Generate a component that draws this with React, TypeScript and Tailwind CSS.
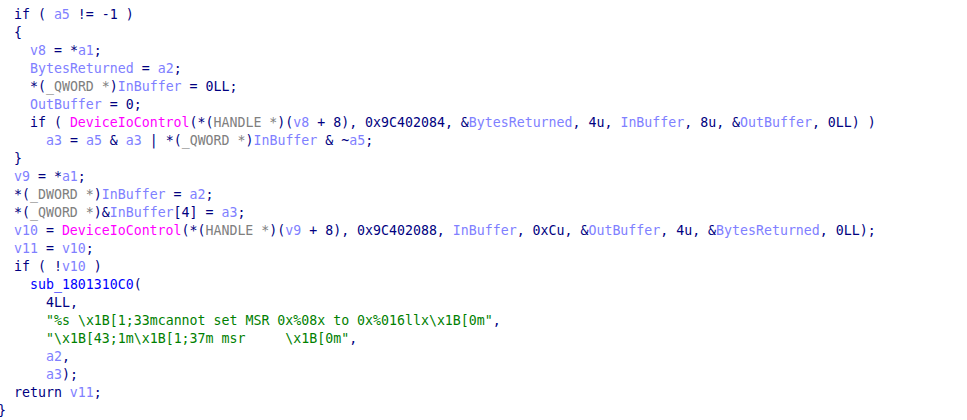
import React from "react";

// token kinds -> IDA pseudocode colours
const tone: Record<string, string> = {
  n: "text-[#000080]",
  v: "text-[#8080ff]",
  g: "text-[#808080]",
  f: "text-[#ff00ff]",
  b: "text-[#0000ff]",
  s: "text-[#008000]",
};

// indent level -> left offset (2 chars per level, column 0 sits just off-screen)
const indent = ["-ml-[2px]", "pl-[14px]", "pl-[30px]", "pl-[46px]"];

type Tok = [string, string];
type Line = [number, Tok[]];

const lines: Line[] = [
  [1, [["n", "if ( "], ["v", "a5"], ["n", " != -1 )"]]],
  [1, [["n", "{"]]],
  [2, [["v", "v8"], ["n", " = *"], ["v", "a1"], ["n", ";"]]],
  [2, [["v", "BytesReturned"], ["n", " = "], ["v", "a2"], ["n", ";"]]],
  [2, [["n", "*("], ["g", "_QWORD *"], ["n", ")"], ["v", "InBuffer"], ["n", " = 0LL;"]]],
  [2, [["v", "OutBuffer"], ["n", " = 0;"]]],
  [
    2,
    [
      ["n", "if ( "],
      ["f", "DeviceIoControl"],
      ["n", "(*("],
      ["g", "HANDLE *"],
      ["n", ")("],
      ["v", "v8"],
      ["n", " + 8), 0x9C402084, &"],
      ["v", "BytesReturned"],
      ["n", ", 4u, "],
      ["v", "InBuffer"],
      ["n", ", 8u, &"],
      ["v", "OutBuffer"],
      ["n", ", 0LL) )"],
    ],
  ],
  [
    3,
    [
      ["v", "a3"],
      ["n", " = "],
      ["v", "a5"],
      ["n", " & "],
      ["v", "a3"],
      ["n", " | *("],
      ["g", "_QWORD *"],
      ["n", ")"],
      ["v", "InBuffer"],
      ["n", " & ~"],
      ["v", "a5"],
      ["n", ";"],
    ],
  ],
  [1, [["n", "}"]]],
  [1, [["v", "v9"], ["n", " = *"], ["v", "a1"], ["n", ";"]]],
  [1, [["n", "*("], ["g", "_DWORD *"], ["n", ")"], ["v", "InBuffer"], ["n", " = "], ["v", "a2"], ["n", ";"]]],
  [1, [["n", "*("], ["g", "_QWORD *"], ["n", ")&"], ["v", "InBuffer"], ["n", "[4] = "], ["v", "a3"], ["n", ";"]]],
  [
    1,
    [
      ["v", "v10"],
      ["n", " = "],
      ["f", "DeviceIoControl"],
      ["n", "(*("],
      ["g", "HANDLE *"],
      ["n", ")("],
      ["v", "v9"],
      ["n", " + 8), 0x9C402088, "],
      ["v", "InBuffer"],
      ["n", ", 0xCu, &"],
      ["v", "OutBuffer"],
      ["n", ", 4u, &"],
      ["v", "BytesReturned"],
      ["n", ", 0LL);"],
    ],
  ],
  [1, [["v", "v11"], ["n", " = "], ["v", "v10"], ["n", ";"]]],
  [1, [["n", "if ( !"], ["v", "v10"], ["n", " )"]]],
  [2, [["b", "sub_1801310C0"], ["n", "("]]],
  [3, [["n", "4LL,"]]],
  [3, [["s", '"%s \\x1B[1;33mcannot set MSR 0x%08x to 0x%016llx\\x1B[0m"'], ["n", ","]]],
  [3, [["s", '"\\x1B[43;1m\\x1B[1;37m msr     \\x1B[0m"'], ["n", ","]]],
  [3, [["v", "a2"], ["n", ","]]],
  [3, [["v", "a3"], ["n", ");"]]],
  [1, [["n", "return "], ["v", "v11"], ["n", ";"]]],
  [0, [["n", "}"]]],
];

export default function App() {
  return (
    <div className="w-[967px] h-[420px] overflow-hidden bg-white">
      <div className="pt-[6px] font-['DejaVu_Sans_Mono',monospace] text-[13.25px] leading-[18px] whitespace-pre">
        {lines.map(([lvl, toks], i) => (
          <div key={i} className={`h-[18px] ${indent[lvl]}`}>
            {toks.map(([k, t], j) => (
              <span key={j} className={tone[k]}>
                {t}
              </span>
            ))}
          </div>
        ))}
      </div>
    </div>
  );
}
